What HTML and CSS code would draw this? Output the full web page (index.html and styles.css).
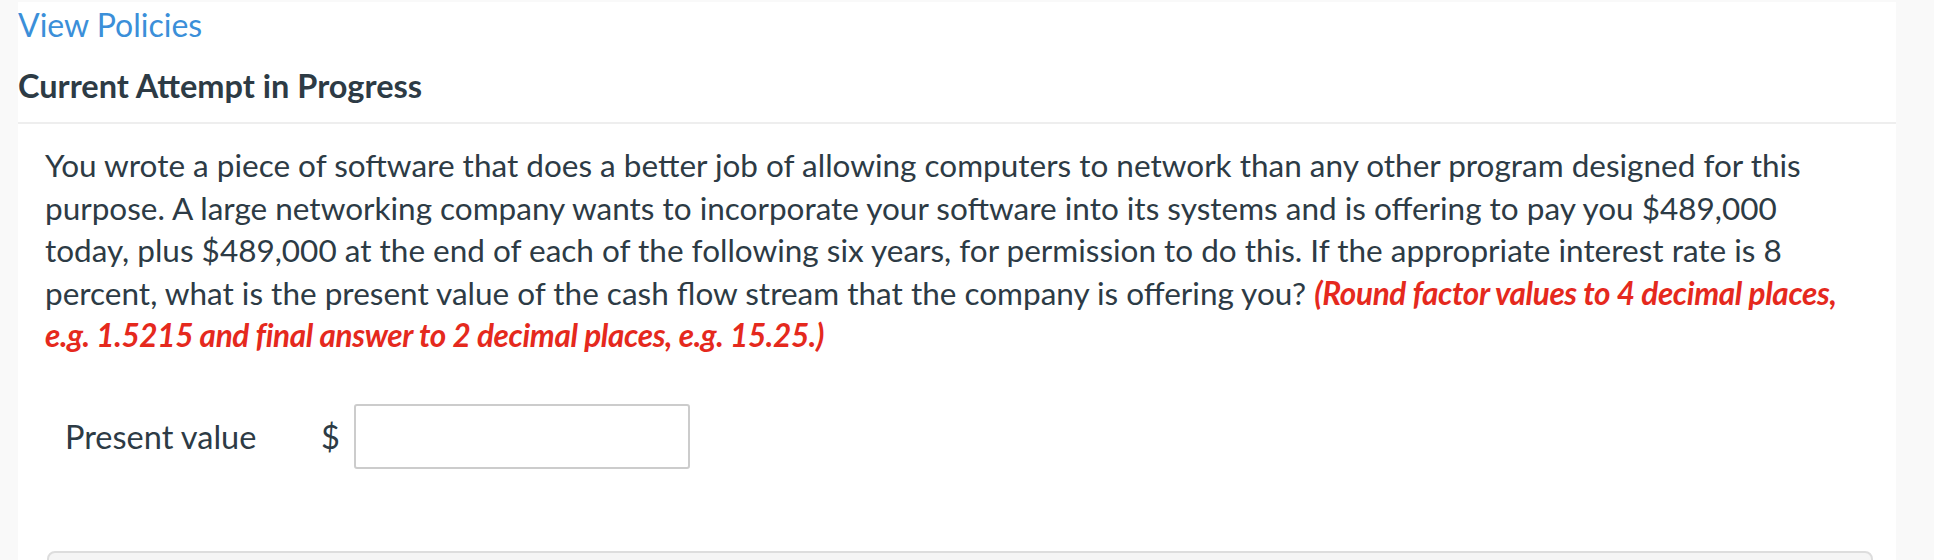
FILE: index.html
```html
<!DOCTYPE html>
<html lang="en">
<head>
<meta charset="utf-8">
<title>Current Attempt in Progress</title>
<link rel="stylesheet" href="styles.css">
</head>
<body>
<div class="panel">
  <a class="policies" href="#">View Policies</a>
  <h2 class="attempt">Current Attempt in Progress</h2>
  <div class="question">
    <p class="prompt">You wrote a piece of software that does a better job of allowing computers to network than any other program designed for this purpose. A large networking company wants to incorporate your software into its systems and is offering to pay you $489,000 today, plus $489,000 at the end of each of the following six years, for permission to do this. If the appropriate interest rate is 8 percent, what is the present value of the cash flow stream that the company is offering you? <em class="hint">(Round factor values to 4 decimal places, e.g. 1.5215 and final answer to 2 decimal places, e.g. 15.25.)</em></p>
    <div class="answer-row">
      <span class="label">Present value</span>
      <span class="currency">$</span>
      <input class="answer" type="text">
    </div>
  </div>
  <div class="footer-box"></div>
</div>
</body>
</html>
```
FILE: styles.css
```css
html, body {
  margin: 0;
  padding: 0;
  background: #f9f9f9;
  height: 560px;
  overflow: hidden;
}
body {
  font-family: Lato, "Open Sans", sans-serif;
  color: #2d3b45;
}
.panel {
  margin: 2px 0 0 18px;
  width: 1878px;
  height: 558px;
  overflow: hidden;
  background: #ffffff;
}
.policies {
  display: block;
  padding-top: 4px;
  font-size: 32px;
  line-height: 38px;
  color: #3b8fd9;
  text-decoration: none;
}
.attempt {
  margin: 23px 0 0 0;
  font-size: 32.5px;
  line-height: 38px;
  font-weight: 700;
  color: #2d3b45;
  padding-bottom: 17px;
  border-bottom: 2px solid #eeeeee;
}
.question {
  padding: 0 40px 0 27px;
}
.prompt {
  margin: 20px 0 0 0;
  font-size: 31.5px;
  line-height: 42.5px;
}
.hint {
  font-weight: 700;
  font-style: italic;
  color: #e5291d;
  letter-spacing: -0.35px;
  font-variant-numeric: tabular-nums;
}
.answer-row {
  display: flex;
  align-items: center;
  margin-top: 47px;
  padding-left: 20px;
  font-size: 32.5px;
}
.label {
  width: 256px;
}
.currency {
  width: 33px;
}
.answer {
  box-sizing: border-box;
  width: 336px;
  height: 65px;
  margin: 0;
  border: 2px solid #cccccc;
  border-radius: 3px;
  background: #ffffff;
  font: inherit;
}
.footer-box {
  margin: 82px 23px 0 29px;
  height: 40px;
  background: #f5f5f5;
  border: 2px solid #dddddd;
  border-radius: 8px;
}
```
